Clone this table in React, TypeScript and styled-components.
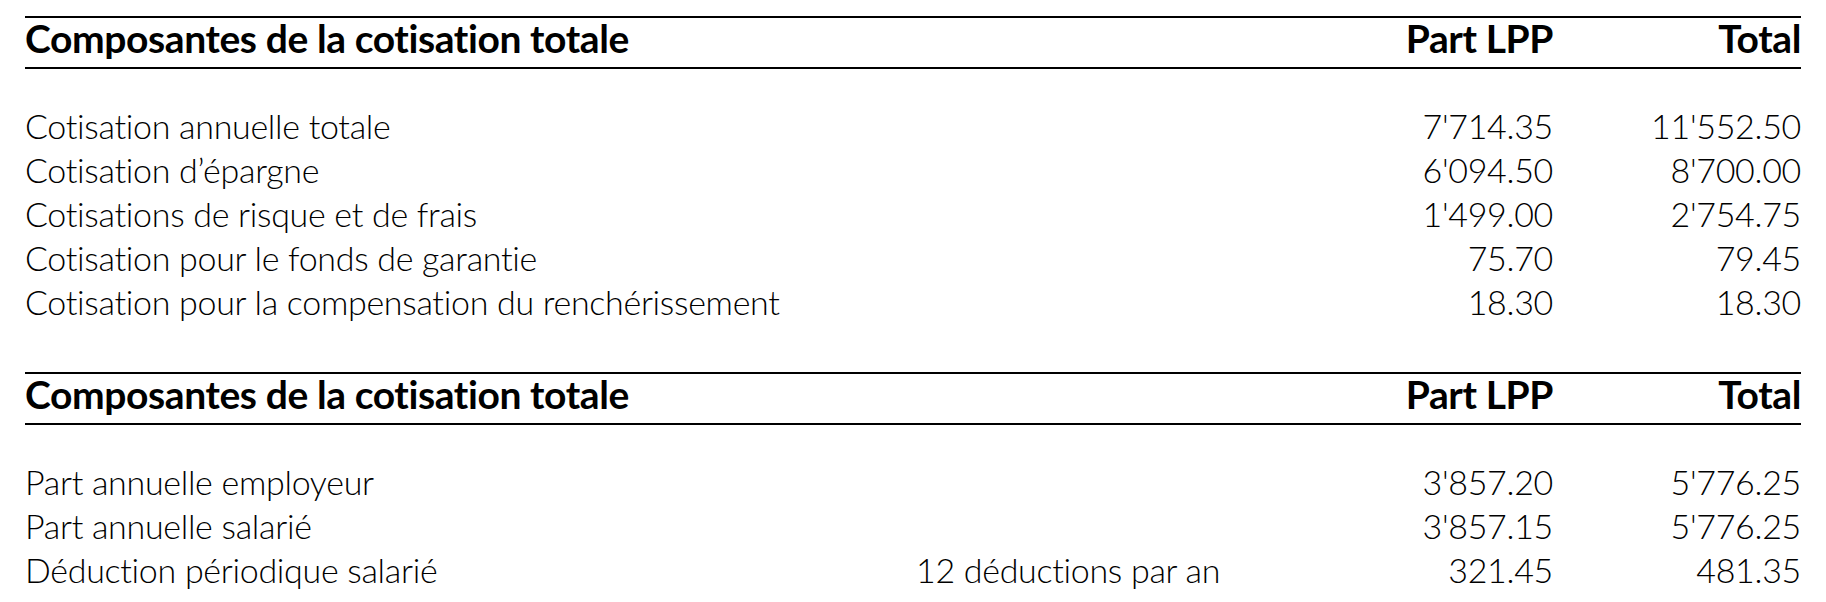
import React from 'react';
import styled, { createGlobalStyle } from 'styled-components';

const GlobalStyle = createGlobalStyle`
  html, body {
    margin: 0;
    padding: 0;
    background: #ffffff;
  }
  body {
    font-family: Lato, "Open Sans", "Liberation Sans", sans-serif;
    color: #000;
  }
`;

type Line = {
  label: string;
  note?: string;
  lpp: string;
  total: string;
};

type Block = {
  title: string;
  lines: Line[];
};

const blocks: Block[] = [
  {
    title: 'Composantes de la cotisation totale',
    lines: [
      { label: 'Cotisation annuelle totale', lpp: "7'714.35", total: "11'552.50" },
      { label: 'Cotisation d’épargne', lpp: "6'094.50", total: "8'700.00" },
      { label: 'Cotisations de risque et de frais', lpp: "1'499.00", total: "2'754.75" },
      { label: 'Cotisation pour le fonds de garantie', lpp: '75.70', total: '79.45' },
      { label: 'Cotisation pour la compensation du renchérissement', lpp: '18.30', total: '18.30' },
    ],
  },
  {
    title: 'Composantes de la cotisation totale',
    lines: [
      { label: 'Part annuelle employeur', lpp: "3'857.20", total: "5'776.25" },
      { label: 'Part annuelle salarié', lpp: "3'857.15", total: "5'776.25" },
      { label: 'Déduction périodique salarié', note: '12 déductions par an', lpp: '321.45', total: '481.35' },
    ],
  },
];

const Page = styled.div`
  width: 1776px;
  padding: 16px 0 0 25px;
  display: flex;
  flex-direction: column;
  gap: 48px;
`;

const Section = styled.section`
  display: flex;
  flex-direction: column;
`;

const columns = `891px 1fr 200px 248px`;

const HeaderRow = styled.div`
  display: grid;
  grid-template-columns: ${columns};
  border-top: 2px solid #000;
  border-bottom: 2px solid #000;
  padding-bottom: 9px;
  font-weight: 700;
  font-size: 39px;
  line-height: 40px;
  letter-spacing: -0.4px;
  white-space: nowrap;
`;

const HeadTitle = styled.div`
  grid-column: 1 / 3;
`;

const Lines = styled.div`
  display: flex;
  flex-direction: column;
  margin-top: 35px;
`;

const Row = styled.div`
  display: grid;
  grid-template-columns: ${columns};
  font-weight: 300;
  font-size: 34px;
  line-height: 44px;
  letter-spacing: -0.3px;
  white-space: nowrap;
`;

const Cell = styled.div<{ $align?: 'left' | 'right' }>`
  text-align: ${({ $align }) => $align ?? 'left'};
`;

const App = () => {
  return (
    <>
      <GlobalStyle />
      <Page>
        {blocks.map((block, i) => (
          <Section key={i}>
            <HeaderRow>
              <HeadTitle>{block.title}</HeadTitle>
              <Cell $align="right">Part LPP</Cell>
              <Cell $align="right">Total</Cell>
            </HeaderRow>
            <Lines>
              {block.lines.map((line) => (
                <Row key={line.label}>
                  <Cell>{line.label}</Cell>
                  <Cell>{line.note ?? ''}</Cell>
                  <Cell $align="right">{line.lpp}</Cell>
                  <Cell $align="right">{line.total}</Cell>
                </Row>
              ))}
            </Lines>
          </Section>
        ))}
      </Page>
    </>
  );
};

export default App;
